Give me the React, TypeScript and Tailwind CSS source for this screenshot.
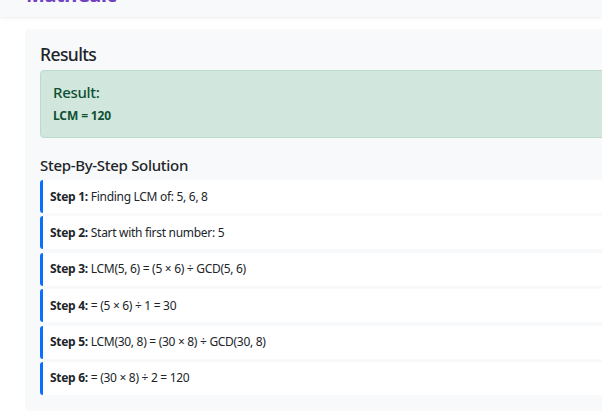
import React from 'react'

const steps: Array<[string, string]> = [
  ['Step 1:', 'Finding LCM of: 5, 6, 8'],
  ['Step 2:', 'Start with first number: 5'],
  ['Step 3:', 'LCM(5, 6) = (5 × 6) ÷ GCD(5, 6)'],
  ['Step 4:', '= (5 × 6) ÷ 1 = 30'],
  ['Step 5:', 'LCM(30, 8) = (30 × 8) ÷ GCD(30, 8)'],
  ['Step 6:', '= (30 × 8) ÷ 2 = 120'],
]

export default function App() {
  return (
    <div
      className="h-[414px] w-[602px] overflow-hidden bg-white text-[#212529]"
      style={{ fontFamily: '"Segoe UI", "Noto Sans", "Open Sans", sans-serif' }}
    >
      <nav className="flex h-[17px] items-end overflow-hidden bg-[#f8f9fa] pl-[26px] shadow-[0_1px_3px_rgba(0,0,0,0.08)]">
        <span className="mb-[12px] text-[20px] font-bold leading-none tracking-[-0.02em] text-[#6f42c1]">MathCalc</span>
      </nav>

      <div className="pl-[25px] pt-[12px]">
        <div className="w-[800px] rounded-[5px] bg-[#f8f9fa] px-[15px] pb-[16px] pt-[15px]">
          <h4 className="mb-[5px] text-[17.5px] font-medium leading-[1.2] tracking-[-0.035em]">Results</h4>

          <div className="rounded-[4px] border border-[#badbcc] bg-[#d1e7dd] px-[12px] py-[12px] text-[#0f5132]">
            <h5 className="mb-[6px] text-[15px] font-medium leading-[1.2] tracking-[-0.02em]">Result:</h5>
            <div className="text-[12px] font-bold leading-[18px] tracking-[-0.01em]">LCM = 120</div>
          </div>

          <h5 className="mb-[6px] mt-[18px] text-[15px] font-medium leading-[1.2] tracking-[-0.02em]">
            Step-By-Step Solution
          </h5>

          <div className="flex flex-col gap-[3.4px]">
            {steps.map(([label, text]) => (
              <div
                key={label}
                className="flex h-[33px] items-center rounded-[3px] border-l-[3px] border-[#0d6efd] bg-white pl-[7px] text-[12px] tracking-[-0.025em]"
              >
                <strong className="mr-[3px] font-bold">{label}</strong>
                <span>{text}</span>
              </div>
            ))}
          </div>
        </div>
      </div>
    </div>
  )
}
